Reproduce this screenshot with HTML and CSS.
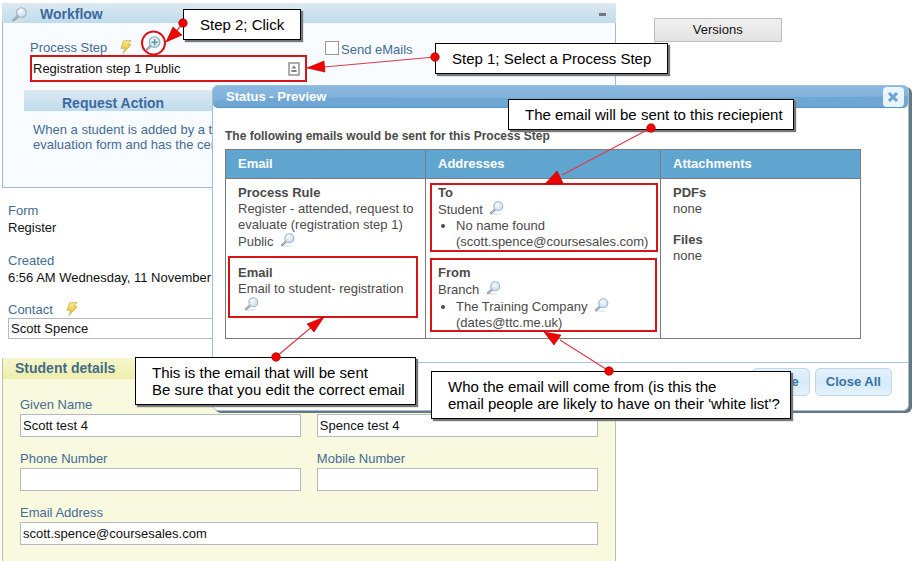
FILE: index.html
```html
<!DOCTYPE html>
<html lang="en">
<head>
<meta charset="utf-8">
<title>Workflow</title>
<link rel="stylesheet" href="styles.css">
</head>
<body>
<svg class="defs" aria-hidden="true">
  <defs>
    <radialGradient id="lens" cx="40%" cy="35%" r="70%">
      <stop offset="0" stop-color="#f4fafd"/>
      <stop offset="1" stop-color="#c3dcec"/>
    </radialGradient>
    <linearGradient id="gold" x1="0" y1="0" x2="0" y2="1">
      <stop offset="0" stop-color="#f8ee8c"/>
      <stop offset="1" stop-color="#e3b52c"/>
    </linearGradient>
    <linearGradient id="gloss" x1="0" y1="0" x2="0" y2="1">
      <stop offset="0" stop-color="#8bb8de"/>
      <stop offset="1" stop-color="#7db0da"/>
    </linearGradient>
  </defs>
  <symbol id="magnifier" viewBox="0 0 14 14">
    <ellipse cx="6" cy="13" rx="5.500" ry=".8" fill="#dfe2e5"/>
    <path d="M5.300 8.600 1.500 12.200" stroke="#8e9da9" stroke-width="2.400" stroke-linecap="round"/>
    <path d="M5.200 8.200 1.600 11.600" stroke="#cbd5dc" stroke-width=".8" stroke-linecap="round"/>
    <circle cx="8.800" cy="5.200" r="4.500" fill="url(#lens)" stroke="#a3b5c2" stroke-width="1.100"/>
    <path d="M6.200 4.800a2.800 2.800 0 0 1 2.600-2.500" fill="none" stroke="#fff" stroke-width="1"/>
  </symbol>
  <symbol id="magnifier-plus" viewBox="0 0 14 14">
    <path d="M5.400 8.300 1.600 12" stroke="#94a9b4" stroke-width="2.200" stroke-linecap="round"/>
    <circle cx="8.400" cy="5.400" r="4.600" fill="url(#lens)" stroke="#96b1bd" stroke-width="1.100"/>
    <path d="M8.400 2.700v5.400M5.700 5.400h5.400" stroke="#5795a0" stroke-width="1.300"/>
  </symbol>
  <symbol id="bolt" viewBox="0 0 12 14">
    <path d="M3.600.8 11 .6 8.200 4.600l2.800.1-8 8.700 2-5.300-4 .3z" fill="url(#gold)" stroke="#c9ae45" stroke-width=".8" stroke-linejoin="round"/>
  </symbol>
</svg>

<div class="page">
  <main class="main">
    <section class="workflow">
      <header class="bar">
        <svg class="icon"><use href="#magnifier"/></svg>
        <h2>Workflow</h2>
        <button class="collapse" type="button" aria-label="Collapse"></button>
      </header>
      <div class="workflow-body">
        <div class="step-row">
          <div class="step">
            <div class="label-row">
              <label for="step">Process Step</label>
              <svg class="bolt"><use href="#bolt"/></svg>
              <svg class="icon plus"><use href="#magnifier-plus"/></svg>
            </div>
            <div class="step-field">
              <input id="step" type="text" value="Registration step 1 Public">
              <svg class="card" viewBox="0 0 12 14">
                <rect x="1" y="1" width="10" height="12" fill="#fff" stroke="#8b8b8b" stroke-width="1.400"/>
                <path d="M6 3.200 8.400 6.600H3.600zM3.400 8h5.200v2H3.400z" fill="#808080"/>
              </svg>
            </div>
          </div>
          <label class="check"><input type="checkbox">Send eMails</label>
        </div>
        <h3 class="bar sub">Request Action</h3>
        <p class="note">When a student is added by a trainer<br>evaluation form and has the certificate</p>
      </div>
    </section>

    <div class="facts">
      <dl>
        <dt>Form</dt><dd>Register</dd>
        <dt>Created</dt><dd>6:56 AM Wednesday, 11 November</dd>
      </dl>
      <div class="label-row">
        <label for="contact">Contact</label>
        <svg class="bolt"><use href="#bolt"/></svg>
      </div>
      <input id="contact" class="text short" type="text" value="Scott Spence">
    </div>

    <section class="student">
      <h2 class="student-title">Student details</h2>
      <form class="fields">
        <div><label for="given">Given Name</label><input class="text" id="given" type="text" value="Scott test 4"></div>
        <div><label for="family">Family Name</label><input class="text" id="family" type="text" value="Spence test 4"></div>
        <div><label for="phone">Phone Number</label><input class="text" id="phone" type="text"></div>
        <div><label for="mobile">Mobile Number</label><input class="text" id="mobile" type="text"></div>
        <div class="wide"><label for="email">Email Address</label><input class="text" id="email" type="text" value="scott.spence@coursesales.com"></div>
      </form>
    </section>
  </main>
  <aside class="side"><button class="versions" type="button">Versions</button></aside>
</div>

<div class="dialog" role="dialog" aria-labelledby="dialog-title">
  <header class="dialog-bar">
    <svg class="gloss" viewBox="0 0 100 20" preserveAspectRatio="none"><path d="M0 0h100v10Q50 12 25 11T0 16z" fill="url(#gloss)"/></svg>
    <h2 id="dialog-title">Status - Preview</h2>
    <button class="dialog-close" type="button" aria-label="Dismiss">
      <svg viewBox="0 0 12 12"><path d="M2 2l8 8M10 2l-8 8" stroke="#6aa3d0" stroke-width="3"/></svg>
    </button>
  </header>
  <div class="dialog-body">
    <p class="lead">The following emails would be sent for this Process Step</p>
    <table>
      <thead><tr><th class="c1">Email</th><th class="c2">Addresses</th><th>Attachments</th></tr></thead>
      <tbody><tr>
        <td>
          <div class="item"><h4>Process Rule</h4>Register - attended, request to evaluate (registration step 1) Public <svg class="icon"><use href="#magnifier"/></svg></div>
          <div class="item"><h4>Email</h4>Email to student- registration<br><svg class="icon inset"><use href="#magnifier"/></svg></div>
        </td>
        <td>
          <div class="item"><h4>To</h4>Student <svg class="icon"><use href="#magnifier"/></svg>
            <ul><li>No name found<br>(scott.spence@coursesales.com)</li></ul></div>
          <div class="item"><h4>From</h4>Branch <svg class="icon"><use href="#magnifier"/></svg>
            <ul><li>The Training Company <svg class="icon"><use href="#magnifier"/></svg><br>(dates@ttc.me.uk)</li></ul></div>
        </td>
        <td>
          <div class="item"><h4>PDFs</h4>none</div>
          <div class="item"><h4>Files</h4>none</div>
        </td>
      </tr></tbody>
    </table>
  </div>
  <footer class="dialog-foot">
    <button type="button">Close</button>
    <button type="button">Close All</button>
  </footer>
</div>

<div class="callout c-click">Step 2; Click</div>
<div class="callout c-step">Step 1; Select a Process Step</div>
<div class="callout snug c-to">The email will be sent to this reciepient</div>
<div class="callout snug c-email">This is the email that will be sent<br>Be sure that you edit the correct email</div>
<div class="callout snug c-from">Who the email will come from (is this the<br>email people are likely to have on their 'white list'?</div>

<svg class="marks" width="918" height="561" viewBox="0 0 918 561" aria-hidden="true">
  <g fill="none" stroke="#d81418" stroke-width="2">
    <rect x="31" y="56" width="275" height="25"/>
    <rect x="229" y="257" width="188" height="60"/>
    <rect x="431" y="184" width="226" height="67"/>
    <rect x="431" y="259" width="225" height="72"/>
    <circle cx="153.500" cy="43" r="11.500"/>
  </g>
  <g stroke="#dc3c48" stroke-width="1.200">
    <path d="M183 23 174 34M435 57 324 67M651 128 562 175M276 357 314 325M609 371 560 340"/>
  </g>
  <g fill="#f40000" stroke="#a00000" stroke-width=".6">
    <path d="M166 42 173 27 182 35zM307 68 324 61 325 72zM545 184 557 171 563 183zM324 317 307 324 314 332zM544 332 561 335 554 345z"/>
    <circle cx="183" cy="23" r="4.300"/>
    <circle cx="435" cy="57" r="4.300"/>
    <circle cx="651" cy="128" r="4.300"/>
    <circle cx="276" cy="357" r="4.300"/>
    <circle cx="609" cy="371" r="4.300"/>
  </g>
</svg>
</body>
</html>
```

FILE: styles.css
```css
* { box-sizing: border-box; }

body {
  margin: 0;
  font: 13px/16px "Liberation Sans", Arial, sans-serif;
  color: #111;
  background: #fff;
}

h2, h3, h4, p, dl, dd, ul { margin: 0; padding: 0; }
h2, h3 { font-size: 14px; }
h4 { font-size: 13px; }
input, button { font: inherit; color: inherit; margin: 0; }
label, dt { color: #446c94; }

.defs { position: absolute; width: 0; height: 0; }
.icon { width: 15px; height: 15px; }
.bolt { width: 12px; height: 14px; }

.page {
  display: grid;
  grid-template-columns: 67fr 33fr;
  height: 100vh;
  padding: 3px 0 0 2px;
  overflow: hidden;
}

.main { display: flex; flex-direction: column; min-width: 0; }

.side { padding: 15px 0 0 38px; }
.versions {
  width: 128px;
  height: 24px;
  padding: 0;
  border: 1px solid #bdbdbd;
  background: linear-gradient(#f0f0f0, #e2e2e2);
}

/* Workflow panel */
.bar {
  display: flex;
  align-items: center;
  height: 20px;
  color: #3c69a0;
  background: linear-gradient(#dde9f1, #bfdcec);
}
.workflow > .bar { gap: 13px; padding: 2px 10px 0; }
.bar h2 { flex: 1; }
.collapse { width: 7px; height: 3px; padding: 0; border: 0; background: #777; }

.workflow-body {
  height: 165px;
  padding: 15px 21px 0;
  border: 1px solid #a9b7c9;
  border-top: 0;
  background: #f8fbff;
}
.step-row { display: flex; gap: 18px; margin-left: 6px; }
.step { width: 277px; }
.label-row { display: flex; align-items: flex-end; gap: 13px; height: 18px; }
.label-row .bolt { margin-bottom: 2px; }
.label-row .plus { margin-bottom: 4px; width: 16px; height: 16px; }
.step-field {
  display: flex;
  align-items: center;
  height: 26px;
  padding: 0 7px 0 3px;
  background: #fff;
}
.step-field input { flex: 1; min-width: 0; padding: 0; border: 0; outline: 0; background: none; }
.card { width: 12px; height: 14px; }
.check { display: flex; align-items: center; gap: 2px; height: 16px; margin-top: 4px; }
.check input {
  width: 14px;
  height: 14px;
  margin-bottom: 4px;
  border: 1px solid #999;
  background: #fff;
  appearance: none;
}
.sub { height: 21px; margin-top: 8px; padding: 4px 38px 0; }
.note { margin-top: 11px; padding-left: 9px; line-height: 15px; color: #446c94; }

/* Record summary */
.facts { padding: 15px 18px 0 6px; }
.facts dt { height: 17px; }
.facts dd { height: 33px; }
.text {
  display: block;
  width: 100%;
  height: 23px;
  padding: 0 2px;
  border: 1px solid #b5bac0;
  background: #fff;
}
.short { height: 21px; }
.facts .label-row { height: 15px; }

/* Student panel */
.student {
  flex: 1;
  margin-top: 19px;
  border: 1px solid #bcc2a4;
  border-width: 0 1px;
  background: #f9f9df;
}
.student-title {
  height: 21px;
  padding: 2px 12px;
  color: #456b85;
  background: linear-gradient(#f6f6ce, #eeeeac);
}
.fields {
  display: grid;
  grid-template-columns: 1fr 1fr;
  gap: 14px 16px;
  padding: 18px 17px;
}
.fields label { display: block; height: 17px; }
.wide { grid-column: 1 / -1; }

/* Preview dialog */
.dialog {
  position: absolute;
  top: 85px;
  left: 212px;
  right: 9px;
  border: 1px solid #9bc3dc;
  border-radius: 6px;
  background: #fff;
  box-shadow: 3px 2px 0 #68777e;
  color: #4a4a4a;
}
.dialog-bar {
  position: relative;
  display: flex;
  align-items: center;
  justify-content: space-between;
  height: 22px;
  padding: 0 4px 0 13px;
  border-bottom: 1px solid #5695c8;
  border-radius: 5px;
  background: #6ea6d4;
  color: #fff;
}
.gloss { position: absolute; inset: 0; width: 100%; height: 100%; border-radius: 5px; }
.dialog-bar h2 { position: relative; font-size: 13px; }
.dialog-close {
  position: relative;
  width: 21px;
  height: 20px;
  padding: 4px;
  border: 0;
  border-radius: 4px;
  background: #eaf4fc;
}
.dialog-close svg { display: block; width: 12px; height: 12px; }
.dialog-body { padding: 20px 47px 23px 12px; }
.lead { margin-bottom: 5px; font-size: 12px; font-weight: bold; }
table { width: 100%; border-collapse: collapse; table-layout: fixed; }
th, td { border: 1px solid #7c7c7c; text-align: left; vertical-align: top; }
th { height: 29px; padding: 6px 12px; color: #fff; background: #60a5d0; }
td { padding: 6px 0 7px 12px; }
.c1 { width: 200px; }
.c2 { width: 235px; }
.item + .item { margin-top: 15px; }
td .icon { margin: 0 3px; vertical-align: -1px; height: 14px; }
td .inset { margin-left: 6px; }
td ul { padding-left: 18px; }

.dialog-foot {
  display: flex;
  justify-content: flex-end;
  gap: 5px;
  padding: 5px 16px 14px;
  border-top: 1px solid #a6c9e2;
}
.dialog-foot button {
  height: 28px;
  padding: 0 10px;
  border: 1px solid #c0d9ea;
  border-radius: 5px;
  background: linear-gradient(#e4f1fb, #d7ebf9 50%, #e4f1fb);
  font-weight: bold;
  color: #3b72a3;
}

/* Annotations */
.callout {
  position: absolute;
  padding: 6px 16px;
  border: 1px solid #000;
  background: #fff;
  box-shadow: 2px 2px 1px #777;
  font-size: 15px;
  line-height: 17px;
  color: #000;
  white-space: nowrap;
}
.snug { padding-right: 10px; }
.c-click { top: 9px; left: 183px; }
.c-step { top: 43px; left: 435px; }
.c-to { top: 99px; left: 508px; }
.c-email { top: 357px; left: 135px; }
.c-from { top: 371px; left: 431px; }
.marks { position: absolute; top: 0; left: 0; pointer-events: none; }
```
